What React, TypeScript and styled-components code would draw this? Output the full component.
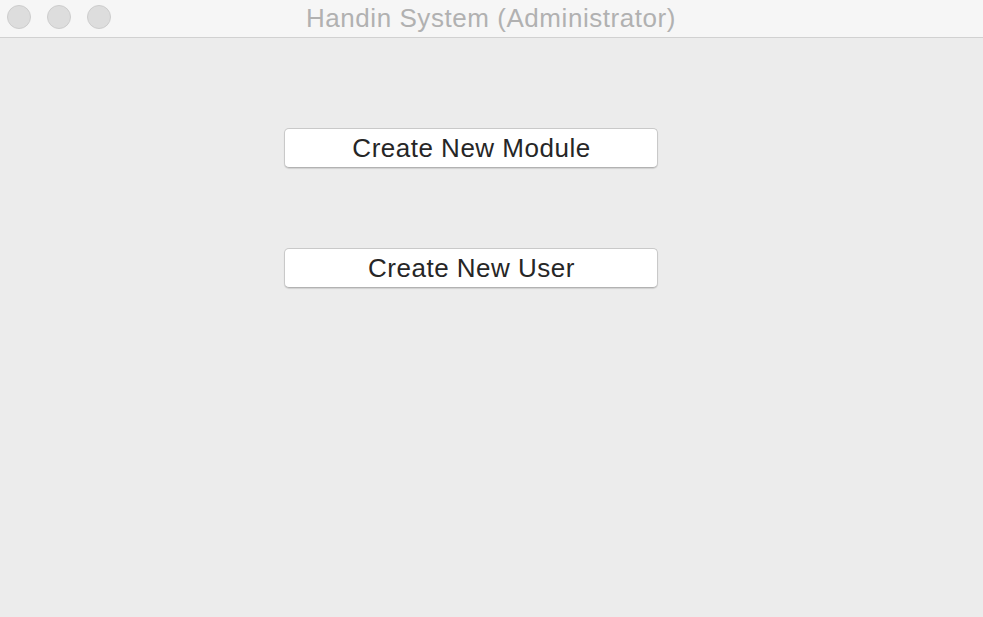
import React from "react";
import styled, { createGlobalStyle } from "styled-components";

const GlobalStyle = createGlobalStyle`
  html, body {
    margin: 0;
    padding: 0;
    width: 983px;
    height: 617px;
    overflow: hidden;
    background: #ececec;
  }
  #root {
    width: 983px;
    height: 617px;
  }
`;

const Window = styled.div`
  width: 983px;
  height: 617px;
  display: flex;
  flex-direction: column;
  background: #ececec;
  font-family: "Liberation Sans", Arial, sans-serif;
`;

const TitleBar = styled.div`
  position: relative;
  height: 37px;
  flex: 0 0 37px;
  background: #f6f6f6;
  border-bottom: 1px solid #d1d1d1;
  display: flex;
  align-items: center;
  justify-content: center;
`;

const Lights = styled.div`
  position: absolute;
  left: 7px;
  top: 5px;
  display: flex;
  gap: 16px;
`;

const Light = styled.span`
  width: 22px;
  height: 22px;
  border-radius: 50%;
  background: #dddddd;
  border: 1px solid #cdcdcd;
`;

const Title = styled.div`
  font-size: 26px;
  color: #b1b1b1;
  letter-spacing: 0.55px;
  margin-top: -1px;
  margin-left: -1px;
`;

const Content = styled.div`
  flex: 1;
  display: flex;
  flex-direction: column;
  gap: 80px;
  padding: 90px 0 0 284px;
`;

const Button = styled.button`
  width: 374px;
  height: 40px;
  box-sizing: border-box;
  background: #ffffff;
  border: 1px solid #c9c9c9;
  border-bottom-color: #b2b2b2;
  border-radius: 5px;
  box-shadow: 0 1px 1px rgba(0, 0, 0, 0.12);
  font-family: "Liberation Sans", Arial, sans-serif;
  font-size: 26px;
  letter-spacing: 0.5px;
  color: #262626;
  padding: 0 0 0 1px;
  display: flex;
  align-items: center;
  justify-content: center;
`;

export default function App() {
  return (
    <>
      <GlobalStyle />
      <Window>
        <TitleBar>
          <Lights>
            <Light />
            <Light />
            <Light />
          </Lights>
          <Title>Handin System (Administrator)</Title>
        </TitleBar>
        <Content>
          <Button>Create New Module</Button>
          <Button>Create New User</Button>
        </Content>
      </Window>
    </>
  );
}
